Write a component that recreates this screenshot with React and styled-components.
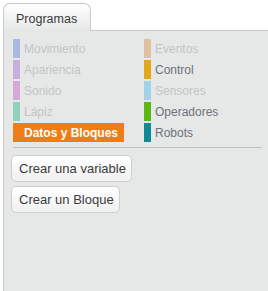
import styled, { createGlobalStyle } from "styled-components";

const GlobalStyle = createGlobalStyle`
  html, body {
    margin: 0;
    padding: 0;
    background: #fff;
    font-family: "Liberation Sans", Arial, sans-serif;
  }
`;

const categories = [
  { name: "Movimiento", color: "#a9b9df", enabled: false },
  { name: "Eventos", color: "#dfc19f", enabled: false },
  { name: "Apariencia", color: "#c9aee0", enabled: false },
  { name: "Control", color: "#e1a91a", enabled: true },
  { name: "Sonido", color: "#d5a9d9", enabled: false },
  { name: "Sensores", color: "#a3d1e9", enabled: false },
  { name: "Lápiz", color: "#91d0bd", enabled: false },
  { name: "Operadores", color: "#5cb712", enabled: true },
  { name: "Datos y Bloques", color: "#ee7d16", enabled: true, selected: true },
  { name: "Robots", color: "#0e8a94", enabled: true },
];

const App = () => {
  return (
    <>
      <GlobalStyle />
      <Page>
        <TabBar>
          <Tab>Programas</Tab>
        </TabBar>
        <Panel>
          <CategoryGrid>
            {categories.map((c) => (
              <Category key={c.name} $color={c.color} $selected={c.selected}>
                <Swatch $color={c.color} />
                <Label $enabled={c.enabled} $selected={c.selected}>
                  {c.name}
                </Label>
              </Category>
            ))}
          </CategoryGrid>
          <Divider />
          <Buttons>
            <Button>Crear una variable</Button>
            <Button>Crear un Bloque</Button>
          </Buttons>
        </Panel>
      </Page>
    </>
  );
};

export default App;

const Page = styled.div`
  width: 268px;
  height: 291px;
  padding: 3px 0 0 3px;
  box-sizing: border-box;
  display: flex;
  flex-direction: column;
  overflow: hidden;
`;

const TabBar = styled.div`
  display: flex;
  height: 27px;
  position: relative;
  z-index: 1;
`;

const Tab = styled.div`
  width: 88px;
  height: 28px;
  box-sizing: border-box;
  border: 1px solid #c9c9c9;
  border-bottom: none;
  border-radius: 7px 7px 0 0;
  background: linear-gradient(to bottom, #ffffff 0%, #f2f3f3 50%, #e6e8e8 100%);
  padding: 9px 0 0 12px;
  font-size: 12.5px;
  line-height: 13px;
  color: #3a3a3a;
`;

const Panel = styled.div`
  flex: 1;
  background: #e6e8e8;
  border-top: 1px solid #c9c9c9;
  border-left: 1px solid #c9c9c9;
  padding: 8px 6px 0 9px;
  display: flex;
  flex-direction: column;
`;

const CategoryGrid = styled.div`
  display: grid;
  grid-template-columns: 131px 1fr;
  row-gap: 2px;
`;

const Category = styled.div`
  width: 111px;
  height: 19px;
  display: flex;
  align-items: center;
  background: ${(p) => (p.$selected ? p.$color : "transparent")};
`;

const Swatch = styled.span`
  width: 7px;
  height: 19px;
  background: ${(p) => p.$color};
  flex-shrink: 0;
`;

const Label = styled.span`
  margin-left: 4px;
  font-size: 12px;
  white-space: nowrap;
  color: ${(p) => (p.$selected ? "#fff" : p.$enabled ? "#6e7278" : "#c4c4c4")};
  font-weight: ${(p) => (p.$selected ? "bold" : "normal")};
`;

const Divider = styled.div`
  height: 1px;
  background: #bdbdbd;
  margin: 5px 0 7px;
`;

const Buttons = styled.div`
  display: flex;
  flex-direction: column;
  align-items: flex-start;
  gap: 4px;
  margin-left: -2px;
`;

const Button = styled.button`
  height: 27px;
  padding: 0 5px 0 7px;
  border: 1px solid #cfcfcf;
  border-radius: 5px;
  background: linear-gradient(to bottom, #ffffff 0%, #f0f0f0 100%);
  font-family: "Liberation Sans", Arial, sans-serif;
  font-size: 13px;
  color: #3b3b3b;
  cursor: pointer;
`;
